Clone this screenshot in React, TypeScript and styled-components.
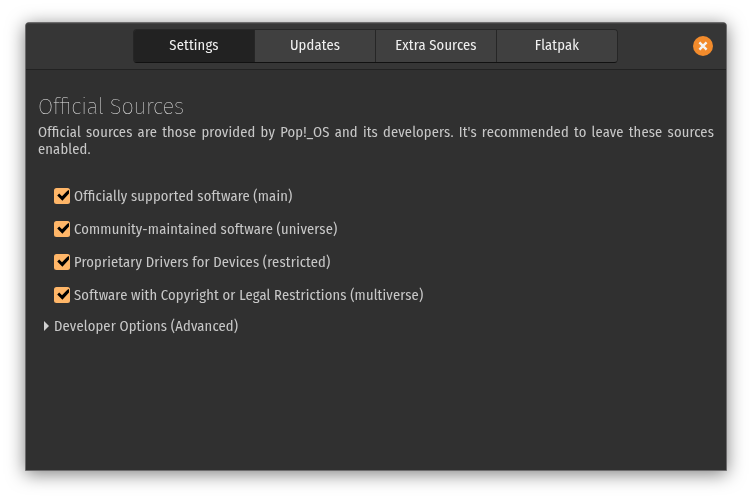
import React from "react";
import styled, { createGlobalStyle } from "styled-components";

const GlobalStyle = createGlobalStyle`
  * { box-sizing: border-box; }
  html, body { margin: 0; background: #fff; overflow: hidden; }
  body {
    font-family: "Fira Sans Condensed", "Noto Sans", sans-serif;
    font-size: 14.5px;
    line-height: 17px;
    font-feature-settings: "liga" 1;
    letter-spacing: 0.16px;
    color: #c8c8c8;
  }
`;

const Desktop = styled.div`
  width: 752px;
  height: 499px;
  padding: 22px 25px 28px;
`;

const Window = styled.main`
  display: flex;
  flex-direction: column;
  height: 449px;
  border: 1px solid #6d6c6d;
  border-radius: 4px 4px 0 0;
  background: #303030;
  box-shadow: 0 3px 18px rgba(0, 0, 0, 0.5);
`;

const Header = styled.header`
  display: grid;
  grid-template-columns: 107px 485px 1fr;
  height: 47px;
  flex: none;
  padding-top: 6px;
  background: #363636;
  border-bottom: 1px solid #222;
  border-radius: 3px 3px 0 0;
  box-shadow: inset 0 1px #444;
`;

const Tabs = styled.nav`
  grid-column: 2;
  display: grid;
  grid-template-columns: 121px 121px 121px 120px;
  height: 34px;
  border-radius: 4px;
  border: 1px solid #262626;
  border-bottom-color: #111;
  overflow: hidden;
`;

const Tab = styled.button<{ $active?: boolean }>`
  padding: 0 0 1px;
  border: 0;
  border-right: 1px solid #262626;
  background: ${(p) => (p.$active ? "#222" : "#404040")};
  color: #f0f0f0;
  font: inherit;
  font-feature-settings: inherit;
  letter-spacing: inherit;
  &:last-child { border-right: 0; }
`;

const Label = styled.span`
  display: block;
  will-change: transform;
`;

const Close = styled.button`
  display: block;
  justify-self: end;
  width: 20px;
  height: 20px;
  margin: 7px 13px 0 0;
  padding: 0;
  border: 0;
  background: none;
  svg { display: block; }
`;

const Content = styled.section`
  padding: 24px 12px 0;
  will-change: transform;
`;

const Title = styled.h1`
  margin: 0;
  height: 30px;
  font-family: "Fira Sans", "Noto Sans", sans-serif;
  font-size: 22px;
  line-height: 26px;
  font-weight: 200;
  letter-spacing: -0.25px;
  color: #e4e4e4;
`;

const Description = styled.p`
  margin: 0;
  text-align: justify;
`;

const Sources = styled.div`
  display: grid;
  grid-auto-rows: 33px;
  margin: 22px 0 0 16px;
`;

const Source = styled.label`
  display: flex;
  align-items: center;
  gap: 4px;
  white-space: nowrap;
`;

const Mark = styled.svg`
  display: block;
  flex: none;
`;

const CheckMark = styled(Mark)`
  margin-bottom: 2px;
`;

const Expander = styled.div`
  display: flex;
  align-items: center;
  height: 29px;
  gap: 5px;
  padding-left: 6px;
`;

const Arrow = styled(Mark)`
  margin-bottom: 2px;
`;

const tabs = ["Settings", "Updates", "Extra Sources", "Flatpak"];
const sources = [
  "Officially supported software (main)",
  "Community-maintained software (universe)",
  "Proprietary Drivers for Devices (restricted)",
  "Software with Copyright or Legal Restrictions (multiverse)",
];

export default function App() {
  return (
    <Desktop>
      <GlobalStyle />
      <Window>
        <Header>
          <Tabs>
            {tabs.map((t, i) => <Tab key={t} $active={i === 0}><Label>{t}</Label></Tab>)}
          </Tabs>
          <Close aria-label="Close">
            <svg width="20" height="20" viewBox="0 0 20 20">
              <circle cx="10" cy="10" r="10" fill="#f28b2c" />
              <path d="M6.4 6.4l7.2 7.2M13.6 6.4l-7.2 7.2" stroke="#f4f4f4" strokeWidth="2.4" />
            </svg>
          </Close>
        </Header>
        <Content>
          <Title>Official Sources</Title>
          <Description>
            Official sources are those provided by Pop!_OS and its developers. It's recommended to leave these sources enabled.
          </Description>
          <Sources>
            {sources.map((s) => (
              <Source key={s}>
                <CheckMark width="16" height="16" viewBox="0 0 16 16">
                  <rect width="16" height="16" rx="2.5" fill="#ffb668" />
                  <path d="M3.2 7.6L5.2 5.6l2.8 2.6L13.4 2.8 15 2v3.6L8.4 12.8z" fill="#000" />
                </CheckMark>
                {s}
              </Source>
            ))}
          </Sources>
          <Expander>
            <Arrow width="5" height="10" viewBox="0 0 5 10">
              <path d="M0 0l5 5-5 5z" fill="#d0d0d0" />
            </Arrow>
            Developer Options (Advanced)
          </Expander>
        </Content>
      </Window>
    </Desktop>
  );
}
